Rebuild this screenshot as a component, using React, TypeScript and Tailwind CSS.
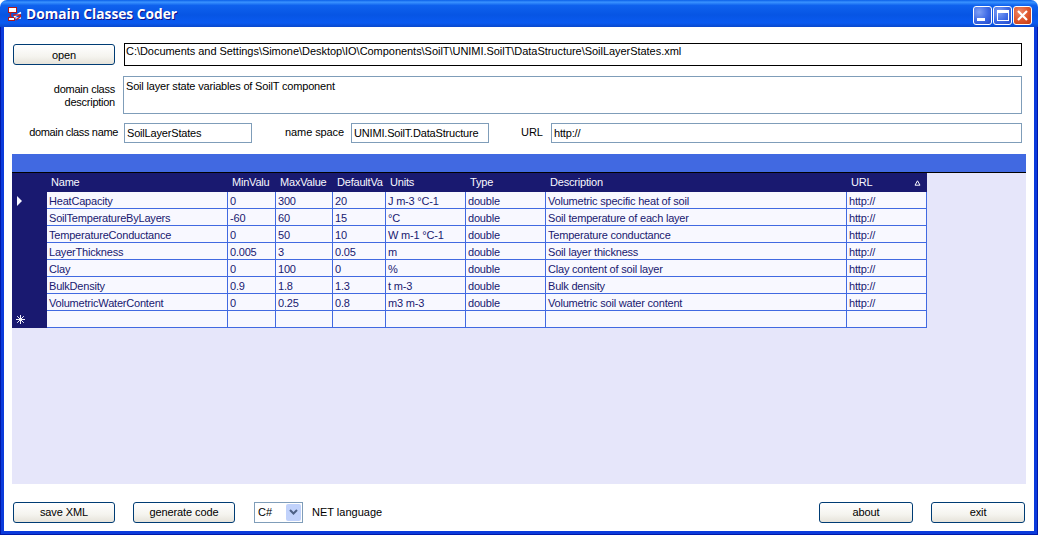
import * as React from 'react';

const font = "font-['Liberation_Sans','Arial',sans-serif]";

const columns = ['Name', 'MinValu', 'MaxValue', 'DefaultVa', 'Units', 'Type', 'Description', 'URL'];

const rows = [
  ['HeatCapacity', '0', '300', '20', 'J m-3 °C-1', 'double', 'Volumetric specific heat of soil', 'http://'],
  ['SoilTemperatureByLayers', '-60', '60', '15', '°C', 'double', 'Soil temperature of each layer', 'http://'],
  ['TemperatureConductance', '0', '50', '10', 'W m-1 °C-1', 'double', 'Temperature conductance', 'http://'],
  ['LayerThickness', '0.005', '3', '0.05', 'm', 'double', 'Soil layer thickness', 'http://'],
  ['Clay', '0', '100', '0', '%', 'double', 'Clay content of soil layer', 'http://'],
  ['BulkDensity', '0.9', '1.8', '1.3', 't m-3', 'double', 'Bulk density', 'http://'],
  ['VolumetricWaterContent', '0', '0.25', '0.8', 'm3 m-3', 'double', 'Volumetric soil water content', 'http://'],
  ['', '', '', '', '', '', '', ''],
];

function XpButton({ label, className }: { label: string; className: string }) {
  return (
    <button
      type="button"
      className={`h-[21px] rounded-[3px] border border-[#003c74] bg-[linear-gradient(180deg,#ffffff_0%,#f5f4ef_60%,#e6e3da_100%)] pt-[1px] text-[11px] leading-none tracking-[-0.1px] text-black ${className}`}
    >
      {label}
    </button>
  );
}

function Field({ value, className }: { value: string; className: string }) {
  return (
    <div className={`truncate border border-[#7f9db9] bg-white px-[2px] text-[11px] tracking-[-0.18px] text-black ${className}`}>
      {value}
    </div>
  );
}

function AppIcon() {
  return (
    <svg width="16" height="16" viewBox="0 0 16 16" className="mt-[1px] shrink-0">
      <rect x="2.5" y="1.5" width="8" height="5" fill="#fff" stroke="#b01818" />
      <rect x="2.5" y="11.5" width="6" height="3" fill="#fff" stroke="#b01818" />
      <path d="M4.5 6.5 V11.5" stroke="#c81c1c" strokeWidth="1.5" />
      <path d="M8 11 L15 6.5 M9.5 12 L15 12" stroke="#fff" strokeWidth="1.5" />
      <path d="M7 9 L15 9 M10 14 L15 10" stroke="#c81c1c" strokeWidth="1.5" fill="none" />
    </svg>
  );
}

function TitleButton({ kind }: { kind: 'min' | 'max' | 'close' }) {
  const bg =
    kind === 'close'
      ? 'bg-[radial-gradient(circle_at_35%_30%,#ee8a6c_0%,#e0582f_50%,#c23a12_100%)]'
      : 'bg-[radial-gradient(circle_at_30%_30%,#7fa0f5_0%,#3c68e4_55%,#2348c8_100%)]';
  return (
    <div className={`flex h-[19px] w-[19px] items-center justify-center rounded-[3px] border border-white ${bg}`}>
      {kind === 'min' ? <div className="mt-[8px] mr-[4px] h-[3px] w-[8px] bg-white" /> : null}
      {kind === 'max' ? (
        <div className="h-[11px] w-[12px] border border-t-[3px] border-white" />
      ) : null}
      {kind === 'close' ? (
        <svg width="13" height="13" viewBox="0 0 13 13">
          <path d="M2 2 L11 11 M11 2 L2 11" stroke="#fff" strokeWidth="2.2" />
        </svg>
      ) : null}
    </div>
  );
}

function Grid() {
  return (
    <div className="grid w-[915px] grid-cols-[35px_181px_48px_57px_53px_80px_80px_301px_80px] grid-rows-[19px_repeat(8,17px)] text-[11px] leading-[18px] tracking-[-0.2px]">
      <div className="bg-[#191970]" />
      {columns.map((c) => (
        <div key={c} className="relative bg-[#191970] pl-[4px] text-[#f8f8ff]">
          {c}
          {c === 'URL' ? (
            <svg width="7" height="6" viewBox="0 0 7 6" className="absolute top-[7px] right-[6px]">
              <path d="M3.5 0.8 L6 5.2 H1 Z" fill="none" stroke="#f8f8ff" />
            </svg>
          ) : null}
        </div>
      ))}
      {rows.map((row, r) => (
        <React.Fragment key={r}>
          <div className="flex items-center bg-[#191970] pl-[4px]">
            {r === 0 ? (
              <svg width="7" height="10" viewBox="0 0 7 10">
                <path d="M1 0 L6 5 L1 10 Z" fill="#f8f8ff" />
              </svg>
            ) : null}
            {r === rows.length - 1 ? (
              <svg width="9" height="9" viewBox="0 0 9 9">
                <path d="M4.5 0 V9 M0 4.5 H9 M1.2 1.2 L7.8 7.8 M7.8 1.2 L1.2 7.8" stroke="#f8f8ff" />
              </svg>
            ) : null}
          </div>
          {row.map((v, c) => (
            <div
              key={c}
              className="overflow-hidden whitespace-nowrap border-r border-b border-[#4169e1] bg-[#f8f8ff] pl-[2px] text-[#191970]"
            >
              {v}
            </div>
          ))}
        </React.Fragment>
      ))}
    </div>
  );
}

export default function App() {
  return (
    <div className={`flex h-[535px] w-[1038px] flex-col overflow-hidden bg-white ${font}`}>
      {/* Title bar */}
      <div className="flex h-[27px] shrink-0 items-center rounded-t-[7px] bg-[linear-gradient(180deg,#0a5fe8_0%,#3a93ff_8%,#0f62ee_20%,#0755e4_55%,#0a5af0_85%,#0a48cc_100%)] pr-[6px] pl-[6px]">
        <AppIcon />
        <span className="mt-[2px] ml-[4px] font-['Open_Sans','Liberation_Sans',sans-serif] text-[13.75px] font-bold text-white [text-shadow:1px_1px_#0f1089]">
          Domain Classes Coder
        </span>
        <div className="mt-[3px] ml-auto flex gap-[1px]">
          <TitleButton kind="min" />
          <TitleButton kind="max" />
          <TitleButton kind="close" />
        </div>
      </div>

      {/* Window frame, dark outer line then the lighter blue */}
      <div className="flex min-h-0 flex-1 flex-col border-x border-b border-[#0019a8]">
        <div className="flex min-h-0 flex-1 flex-col border-x-3 border-b-3 border-[#0b3bdc] bg-white pt-[16px]">
          <div className="flex h-[23px] items-center pl-[9px]">
            <XpButton label="open" className="w-[102px]" />
            <div className="ml-[9px] h-[23px] w-[898px] truncate border border-black bg-white px-[1px] text-[11px] leading-[15px] tracking-[-0.04px] text-black">
              C:\Documents and Settings\Simone\Desktop\IO\Components\SoilT\UNIMI.SoilT\DataStructure\SoilLayerStates.xml
            </div>
          </div>

          <div className="mt-[10px] flex h-[38px] pl-[8px]">
            <div className="mt-[7px] w-[103px] text-right text-[11px] leading-[13px] tracking-[-0.25px] text-black">
              domain class
              <br />
              description
            </div>
            <Field
              value="Soil layer state variables of SoilT component"
              className="ml-[8px] h-[38px] w-[899px] leading-[18px]"
            />
          </div>

          <div className="mt-[8px] flex h-[21px] items-center text-[11px] text-black">
            <span className="w-[114px] whitespace-nowrap text-right tracking-[-0.35px]">domain class name</span>
            <Field value="SoilLayerStates" className="ml-[6px] h-[20px] w-[128px] leading-[19px]" />
            <span className="w-[92px] whitespace-nowrap text-right tracking-[-0.1px]">name space</span>
            <Field value="UNIMI.SoilT.DataStructure" className="ml-[7px] h-[20px] w-[138px] leading-[19px]" />
            <span className="w-[54px] whitespace-nowrap text-right">URL</span>
            <Field value="http://" className="ml-[8px] h-[20px] w-[471px] leading-[19px]" />
          </div>

          {/* Data grid panel */}
          <div className="mt-[11px] ml-[8px] flex h-[330px] w-[1014px] flex-col bg-[#e6e6fa]">
            <div className="h-[18px] shrink-0 bg-[#4169e1]" />
            <div className="h-px shrink-0 bg-black" />
            <Grid />
          </div>

          {/* Bottom actions */}
          <div className="mt-[17px] flex h-[22px] items-center pl-[9px] text-[11px] text-black">
            <XpButton label="save XML" className="w-[102px]" />
            <XpButton label="generate code" className="ml-[18px] w-[102px]" />
            <div className="ml-[19px] flex h-[21px] w-[49px] items-center border border-[#7f9db9] bg-white pr-[1px] pl-[3px]">
              <span className="flex-1">C#</span>
              <div className="flex h-[17px] w-[15px] items-center justify-center rounded-[2px] bg-[#c1d2fb]">
                <svg width="9" height="6" viewBox="0 0 9 6">
                  <path d="M1 1 L4.5 4.5 L8 1" fill="none" stroke="#4d6185" strokeWidth="2" />
                </svg>
              </div>
            </div>
            <span className="ml-[9px]">NET language</span>
            <XpButton label="about" className="ml-auto w-[94px]" />
            <XpButton label="exit" className="mr-[9px] ml-[18px] w-[94px]" />
          </div>
        </div>
      </div>
    </div>
  );
}
